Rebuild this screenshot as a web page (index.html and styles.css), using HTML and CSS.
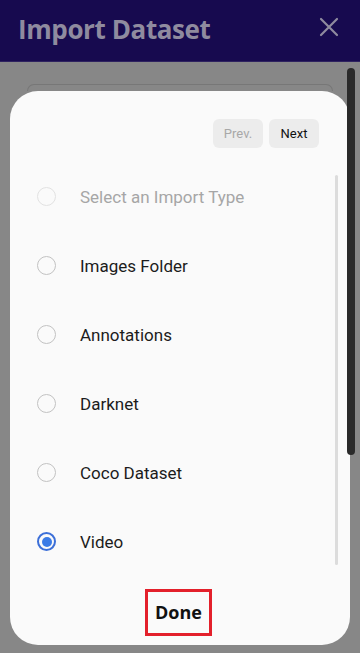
FILE: index.html
```html
<!DOCTYPE html>
<html lang="en">
<head>
    <meta charset="UTF-8">
    <meta name="viewport" content="width=device-width, initial-scale=1.0">
    <title>Import Dataset</title>
    <link rel="stylesheet" href="styles.css">
</head>
<body>
    <!-- Top bar -->
    <header class="topbar">
        <h1>Import Dataset</h1>
        <button class="close-btn" aria-label="Close">
            <svg width="20" height="20" viewBox="0 0 20 20">
                <path d="M2 2 L18 18 M18 2 L2 18" stroke="#8f8b9f" stroke-width="2.2" stroke-linecap="round"/>
            </svg>
        </button>
    </header>

    <!-- Dimmed page with the dialog on top -->
    <div class="backdrop">
        <div class="page-scroll"></div>
        <div class="ghost-card"></div>

        <div class="dialog">
            <div class="pager">
                <button class="pager-btn disabled">Prev.</button>
                <button class="pager-btn">Next</button>
            </div>

            <div class="options">
                <ul class="option-list">
                    <li class="option disabled"><span class="radio"></span>Select an Import Type</li>
                    <li class="option"><span class="radio"></span>Images Folder</li>
                    <li class="option"><span class="radio"></span>Annotations</li>
                    <li class="option"><span class="radio"></span>Darknet</li>
                    <li class="option"><span class="radio"></span>Coco Dataset</li>
                    <li class="option checked"><span class="radio"></span>Video</li>
                </ul>
                <div class="scroll-thumb"></div>
            </div>

            <div class="footer">
                <button class="done-btn">Done</button>
            </div>
        </div>
    </div>
</body>
</html>
```

FILE: styles.css
```css
/* General styles */
body {
    margin: 0;
    width: 360px;
    height: 653px;
    overflow: hidden;
    font-family: Roboto, "Noto Sans", sans-serif;
    background-color: #878787;
}

/* Top bar */
.topbar {
    height: 62px;
    display: flex;
    align-items: center;
    justify-content: space-between;
    padding: 0 18px 0 18px;
    background-color: #170a4f;
    border-bottom: 1px solid #2e2260;
    box-sizing: border-box;
}

.topbar h1 {
    margin: 0;
    margin-top: -4px;
    font-family: "Open Sans", "Noto Sans", sans-serif;
    font-size: 26px;
    font-weight: 700;
    color: #8f8b9f;
    letter-spacing: -0.4px;
}

.close-btn {
    border: none;
    background: none;
    padding: 0;
    margin-top: -8px;
    margin-right: 3px;
    width: 20px;
    height: 20px;
}

/* Backdrop */
.backdrop {
    position: relative;
    height: 591px;
    padding: 22px 10px 0 10px;
    box-sizing: border-box;
}

.page-scroll {
    position: absolute;
    right: 5px;
    top: 6px;
    width: 8px;
    height: 387px;
    border-radius: 4px;
    background-color: #2a2a2a;
    z-index: 2;
}

.ghost-card {
    height: 6px;
    margin: 0 17px 0 17px;
    border: 1px solid #777;
    border-bottom: none;
    border-radius: 10px 10px 0 0;
}

.dialog {
    position: relative;
    height: 554px;
    background-color: #fafafa;
    border-radius: 28px;
    box-sizing: border-box;
    padding-top: 28px;
}

/* Prev / Next */
.pager {
    display: flex;
    justify-content: flex-end;
    gap: 6px;
    padding-right: 31px;
}

.pager-btn {
    width: 50px;
    height: 29px;
    border: none;
    border-radius: 6px;
    background-color: #ececec;
    font-family: Roboto, sans-serif;
    font-size: 13px;
    color: #111;
    padding: 0;
}

.pager-btn.disabled {
    color: #a8a8a8;
}

/* Options */
.options {
    display: flex;
    margin-top: 14px;
    padding-right: 12px;
}

.option-list {
    flex: 1;
    list-style: none;
    margin: 0;
    padding: 0;
}

.option {
    height: 69px;
    display: flex;
    align-items: center;
    padding-left: 27px;
    font-size: 17px;
    color: #1c1c1c;
}

.option.disabled {
    color: #a6a6a6;
}

.radio {
    width: 17px;
    height: 17px;
    border: 1.6px solid #c2c2c2;
    border-radius: 50%;
    margin-right: 24px;
    display: flex;
    align-items: center;
    justify-content: center;
}

.option.disabled .radio {
    border-color: #e2e2e2;
}

.option.checked .radio {
    border: 2.5px solid #3c6fd8;
    width: 15px;
    height: 15px;
}

.option.checked .radio::after {
    content: "";
    width: 10px;
    height: 10px;
    border-radius: 50%;
    background-color: #3b7be6;
}

.scroll-thumb {
    width: 3px;
    margin: 13px 0 11px 0;
    background-color: #dcdcdc;
    border-radius: 2px;
}

/* Done */
.footer {
    display: flex;
    justify-content: center;
    margin-top: 13px;
    padding-right: 3px;
}

.done-btn {
    width: 67px;
    height: 47px;
    border: 3px solid #e3202b;
    background: none;
    font-family: "Open Sans", "Noto Sans", sans-serif;
    font-size: 18px;
    font-weight: 700;
    color: #111;
    padding: 0 0 2px 0;
}
```
